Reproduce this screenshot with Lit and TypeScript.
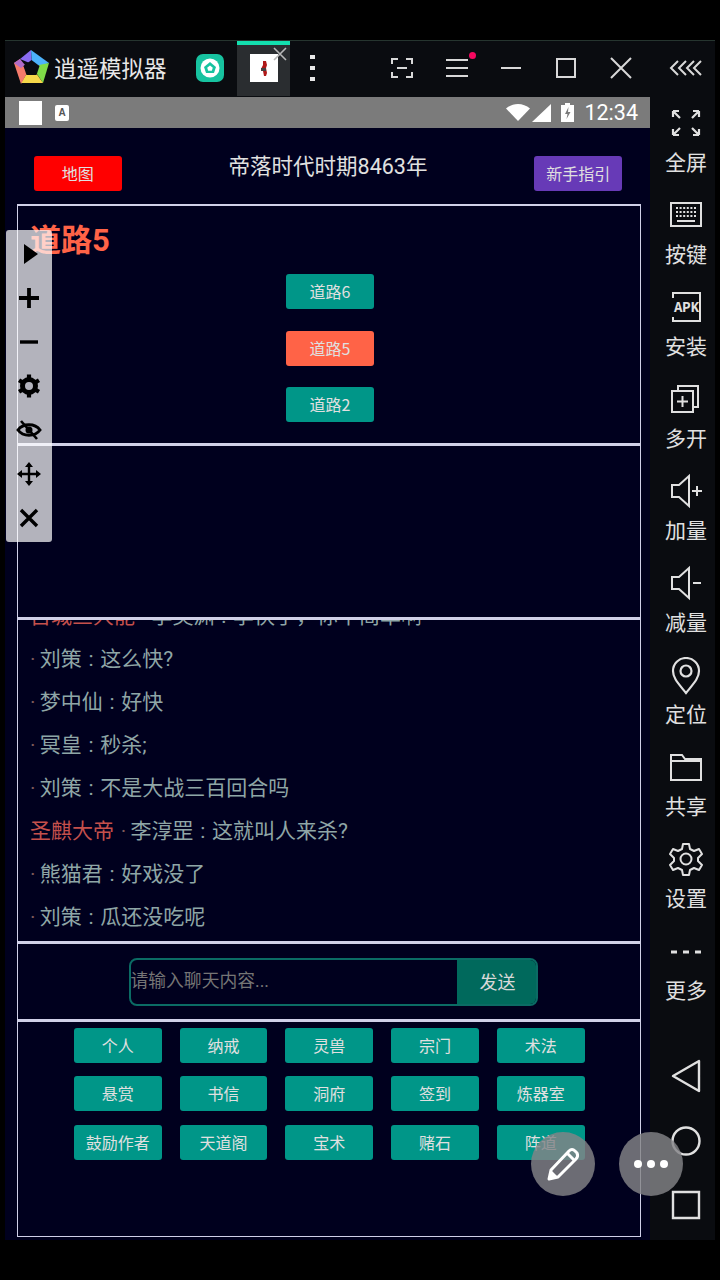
import { LitElement, html, css, svg } from "lit";
import { customElement } from "lit/decorators.js";

const sideItems: [string, unknown][] = [
  ["全屏", svg`<path d="M6 6l7 7M6 6v6M6 6h6M32 6l-7 7M32 6v6M32 6h-6M6 30l7-7M6 30v-6M6 30h6M32 30l-7-7M32 30v-6M32 30h-6" stroke-width="2.2"/>`],
  ["按键", svg`<rect x="4" y="6" width="30" height="23" stroke-width="2"/><path d="M9 11h20M9 15h20M9 19h20" stroke-width="2" stroke-dasharray="2 1.6"/><path d="M10 24h18" stroke-width="2"/>`],
  ["安装", svg`<path d="M6 9V4h27v28H6v-4" stroke-width="2"/><text x="19.5" y="23" text-anchor="middle" class="apk">APK</text>`],
  ["多开", svg`<path d="M11 10V5h20v21h-5" stroke-width="2"/><rect x="5" y="10" width="21" height="21" stroke-width="2"/><path d="M15.500 15v11M10 20.500h11" stroke-width="2"/>`],
  ["加量", svg`<path d="M5 12h7l10-9v30l-10-9H5z" stroke-width="2"/><path d="M25 18h10M30 13v10" stroke-width="2"/>`],
  ["减量", svg`<path d="M5 12h7l10-9v30l-10-9H5z" stroke-width="2"/><path d="M26 18h8" stroke-width="2"/>`],
  ["定位", svg`<path d="M19 36C11 26 6 21 6 14a13 13 0 0 1 26 0c0 7-5 12-13 22z" stroke-width="2.2"/><circle cx="19" cy="14" r="5.500" stroke-width="2.2"/>`],
  ["共享", svg`<path d="M4 31V6h11l3 4h16v21zM4 12h30" stroke-width="2"/>`],
  ["设置", svg`<path d="M16 3h6l1 5 4 2 5-2 3 5-4 4v3l4 4-3 5-5-2-4 2-1 5h-6l-1-5-4-2-5 2-3-5 4-4v-3l-4-4 3-5 5 2 4-2z" stroke-width="2" stroke-linejoin="round"/><circle cx="19" cy="18" r="5.500" stroke-width="2"/>`],
  ["更多", svg`<path d="M4 19h6M16 19h6M28 19h6" stroke-width="3"/>`],
];

const toolIcons = [
  svg`<path d="M8 3l14 10L8 23z" fill="#000"/>`,
  svg`<path d="M13 3v20M3 13h20" stroke="#000" stroke-width="3.800" fill="none"/>`,
  svg`<path d="M4 13h18" stroke="#000" stroke-width="3.400" fill="none"/>`,
  svg`<circle cx="13" cy="13" r="6.500" fill="none" stroke="#000" stroke-width="5"/><path d="M13 1.500v5M13 19.500v5M3.040 7.250l4.300 2.500M18.660 16.250l4.300 2.500M3.040 18.750l4.300-2.500M18.660 9.750l4.300-2.500" stroke="#000" stroke-width="4.200"/>`,
  svg`<path d="M2 13c5-7 17-7 22 0-5 7-17 7-22 0z" fill="none" stroke="#000" stroke-width="3"/><circle cx="13" cy="13" r="3.500" fill="#000"/><path d="M5 4l16 18" stroke="#000" stroke-width="2.600"/>`,
  svg`<path d="M13 3v20M3 13h20" stroke="#000" stroke-width="2.400" fill="none"/><path d="M13 1l4 5H9zM13 25l4-5H9zM1 13l5-4v8zM25 13l-5-4v8z" fill="#000"/>`,
  svg`<path d="M5 5l16 16M21 5L5 21" stroke="#000" stroke-width="3.400" fill="none"/>`,
];

const chat: [string, string][] = [
  ["古城三大能", "李英渊 : 李快了，你不简单啊"],
  ["", "刘策 : 这么快?"],
  ["", "梦中仙 : 好快"],
  ["", "冥皇 : 秒杀;"],
  ["", "刘策 : 不是大战三百回合吗"],
  ["圣麒大帝", "李淳罡 : 这就叫人来杀?"],
  ["", "熊猫君 : 好戏没了"],
  ["", "刘策 : 瓜还没吃呢"],
];

const gridRows = [
  ["个人", "纳戒", "灵兽", "宗门", "术法"],
  ["悬赏", "书信", "洞府", "签到", "炼器室"],
  ["鼓励作者", "天道阁", "宝术", "赌石", "阵道"],
];

@customElement("app-root")
export class AppRoot extends LitElement {
  static styles = css`
    :host {
      display: block;
      width: 720px;
      height: 1280px;
      background: #000;
      overflow: hidden;
      position: relative;
      font-family: "Noto Sans CJK SC", "Noto Sans", sans-serif;
    }
    .window {
      margin: 40px 5px 0;
      width: 710px;
      height: 1200px;
      border-top: 1px solid #26352f;
      box-sizing: border-box;
      display: flex;
      flex-direction: column;
      background: #0a0c10;
    }
    .bar {
      height: 56px;
      flex: none;
      display: flex;
      align-items: center;
      color: #e8e8e8;
      position: relative;
      padding-bottom: 2px;
      box-sizing: border-box;
    }
    .logo { margin-left: 8px; width: 38px; height: 38px; flex: none; }
    .brand { margin-left: 3px; font-size: 22.500px; width: 113px; white-space: nowrap; line-height: 30px; margin-top: -3px; }
    .appicon { margin-left: 29px; width: 28px; height: 28px; flex: none; }
    .tab {
      margin-left: 13px;
      width: 53px;
      height: 55px;
      background: #2a2d30;
      border-top: 4px solid #13dfae;
      box-sizing: border-box;
      position: relative;
      display: flex;
      align-items: center;
      justify-content: center;
      flex: none;
      align-self: flex-start;
    }
    .tabthumb { width: 28px; height: 28px; background: #fff; margin-top: -5px; }
    .tabx { position: absolute; top: 2px; right: 3px; width: 14px; height: 14px; }
    .win { flex: none; display: block; overflow: visible; }
    .win * { fill: none; stroke: #d8d8d8; }
    .i1 { margin-left: 19px; }
    .i2 { margin-left: 75px; }
    .i3, .i4 { margin-left: 33px; }
    .i5 { margin-left: 35px; }
    .i6 { margin-left: 39px; }
    .dot { position: absolute; left: 464px; top: 11px; width: 7px; height: 7px; border-radius: 50%; background: #f5085f; }
    .body { flex: 1; display: flex; min-height: 0; }
    .screen { width: 645px; flex: none; display: flex; flex-direction: column; background: #00001e; }
    .status {
      height: 31px;
      flex: none;
      background: #7b7b7b;
      display: flex;
      align-items: center;
      padding: 0 12px 0 14px;
    }
    .sq { width: 23px; height: 24px; background: #fff; }
    .aicon { margin-left: 13px; width: 14px; height: 16px; background: #fff; border-radius: 2px; color: #555; font: bold 10px "Liberation Sans", sans-serif; text-align: center; line-height: 15px; }
    .spacer { flex: 1; }
    .time { font: 21.500px Roboto, sans-serif; color: #fff; margin-left: 10px; }
    .st { display: block; flex: none; }
    .st2 { margin-left: 2px; }
    .st3 { margin-left: 10px; }
    .app { flex: 1; min-height: 0; display: flex; flex-direction: column; padding: 0 9px 3px 12px; }
    .head { height: 76px; flex: none; display: flex; padding: 28px 19px 0 17px; box-sizing: border-box; }
    .head .title { flex: 1; text-align: center; color: #e0e0e0; font-family: Roboto, "Noto Sans CJK SC", sans-serif; font-size: 21.500px; line-height: 30px; margin-top: -4px; white-space: nowrap; }
    .btn {
      width: 87.600px;
      height: 35px;
      line-height: 35px;
      border-radius: 3px;
      text-align: center;
      font-size: 16px;
      color: #e0e0e0;
      background: #009688;
      flex: none;
      white-space: nowrap;
    }
    .btn.red { background: #f00; }
    .btn.purple { background: #673ab7; }
    .btn.tomato { background: #ff6347; }
    .panel { border: 1px solid #d0d0e8; border-top-width: 2px; box-sizing: border-box; flex: none; }
    .p1 { height: 240px; padding: 0 0 0 12px; }
    .p1 h1 { margin: 13px 0 0; font-family: Roboto, "Noto Sans CJK SC", sans-serif; font-size: 31px; line-height: 44px; font-weight: 700; color: #ff6347; height: 53px; }
    .roads { display: flex; flex-direction: column; align-items: center; gap: 21.500px; margin-left: -10px; padding-top: 2px; }
    .p2 { height: 174px; }
    .p3 { height: 324px; overflow: hidden; display: flex; flex-direction: column; justify-content: flex-end; padding: 0 12px 2px; }
    .line { flex: none; height: 43px; line-height: 43px; font-family: Roboto, "Noto Sans CJK SC", sans-serif; font-size: 21px; word-spacing: 1.500px; color: #8fa6a6; white-space: nowrap; }
    .line b { font-weight: 400; color: #c5504c; }
    .line i { font-style: normal; color: #7e5a5a; margin-right: -2.500px; }
    .p4 { height: 78px; display: flex; justify-content: center; align-items: center; padding-left: 8px; }
    .send { width: 409px; height: 48px; display: flex; border: 2px solid #0b6b64; border-radius: 8px; box-sizing: border-box; overflow: hidden; }
    .send input { flex: 1; min-width: 0; background: transparent; border: 0; outline: 0; padding: 0 0 2px 0; font: 17.800px Roboto, "Noto Sans CJK SC", sans-serif; color: #ccc; }
    .send input::placeholder { color: #757575; opacity: 1; }
    .send span { width: 76px; background: #00695c; color: #d8d8d8; text-align: center; font-size: 18px; line-height: 42px; padding-left: 3px; }
    .p5 { flex: 1; min-height: 0; padding: 6px 0 0 56px; display: flex; flex-direction: column; gap: 13.300px; }
    .p5 .btn { line-height: 34px; }
    .row { display: flex; gap: 18.150px; }
    .side { flex: 1; display: flex; flex-direction: column; padding: 5px 0 0 7px; color: #e0e0e0; }
    .sitem { height: 92px; flex: none; display: flex; flex-direction: column; align-items: center; }
    .sitem svg { width: 38px; height: 38px; margin-top: 3px; margin-bottom: 3px; fill: none; stroke: #e0e0e0; flex: none; }
    .sitem svg .apk { font: 700 14px "Liberation Mono", monospace; fill: #e0e0e0; stroke: none; }
    .sitem span { font-size: 21px; line-height: 30px; }
    .nav { margin-top: 22px; display: flex; flex-direction: column; align-items: center; }
    .nav svg { width: 34px; height: 64.500px; fill: none; stroke: #e0e0e0; stroke-width: 2.400; display: block; }
    .tools {
      position: absolute;
      left: 6px;
      top: 230px;
      width: 46px;
      height: 312px;
      background: rgba(255, 255, 255, 0.7);
      border-radius: 3px;
      display: flex;
      flex-direction: column;
      align-items: center;
      padding-top: 2px;
      box-sizing: border-box;
    }
    .tools div { height: 44px; flex: none; display: flex; align-items: center; justify-content: center; }
    .tools svg { width: 26px; height: 26px; display: block; }
    .fab {
      position: absolute;
      top: 1132px;
      width: 64px;
      height: 64px;
      border-radius: 50%;
      background: rgba(132, 132, 136, 0.82);
      display: flex;
      align-items: center;
      justify-content: center;
    }
    .f1 { left: 531px; }
    .f2 { left: 619px; gap: 5px; }
    .f2 i { width: 8px; height: 8px; border-radius: 50%; background: #fff; }
  `;

  render() {
    return html`
      <div class="window">
        <div class="bar">
          <svg class="logo" viewBox="0 0 38 38">
            <path d="M18 1L7 10l12 5z" fill="#8a6cf2"/>
            <path d="M18 1l18 13-10 4-7-4z" fill="#4cb2fa"/>
            <path d="M36 14l-6 20-8-12 4-6z" fill="#7fdc48"/>
            <path d="M30 34H8l6-10h9z" fill="#f6d84a"/>
            <path d="M8 35L1 14l6-4 7 14z" fill="#f57b6b"/>
            <path d="M1 14L7 10l5 6-4 3z" fill="#b06cc8"/>
            <path d="M18.500 11l8 6-3 9h-10l-3-9z" fill="#0a0c10"/>
          </svg>
          <div class="brand">逍遥模拟器</div>
          <svg class="appicon" viewBox="0 0 28 28">
            <rect width="28" height="28" rx="7" fill="#17c3a0"/>
            <circle cx="14" cy="14" r="9.500" fill="#fff"/>
            <path d="M14 8l6 5-2 6h-8l-2-6z" fill="#17c3a0"/>
            <path d="M14 11.500l2.800 2.300-1 3h-3.600l-1-3z" fill="#fff"/>
          </svg>
          <div class="tab">
            <div class="tabthumb">
              <svg viewBox="0 0 28 28" width="28" height="28">
                <path d="M13 7h3l1 4-1 3 1 5-1 3h-2l-1-5-2-2 2-4z" fill="#b01818"/>
                <path d="M11 14h5v3h-5z" fill="#444"/>
              </svg>
            </div>
            <svg class="tabx" viewBox="0 0 14 14"><path d="M1 1l12 12M13 1L1 13" stroke="#b8b8b8" stroke-width="1.600"/></svg>
          </div>
          <svg class="win i1" width="7" height="26" viewBox="0 0 7 26">
            <path style="stroke:none;fill:#e8e8e8" d="M1 0h5v4H1zM1 11h5v4H1zM1 22h5v4H1z"/>
          </svg>
          <svg class="win i2" width="22" height="20" viewBox="0 0 22 20">
            <path stroke-width="2" d="M1 6V1h6M15 1h6v5M1 14v5h6M15 19h6v-5M6 10h10"/>
          </svg>
          <svg class="win i3" width="22" height="20" viewBox="0 0 22 20">
            <path stroke-width="2.200" d="M0 2h22M0 10h22M0 18h22"/>
          </svg>
          <svg class="win i4" width="20" height="20" viewBox="0 0 20 20">
            <path stroke-width="2" d="M0 10h20"/>
          </svg>
          <svg class="win i5" width="20" height="20" viewBox="0 0 20 20">
            <path stroke-width="2" d="M1 1h18v18H1z"/>
          </svg>
          <svg class="win i5" width="20" height="20" viewBox="0 0 20 20">
            <path stroke-width="2" d="M0 0l20 20M20 0L0 20"/>
          </svg>
          <svg class="win i6" width="32" height="16" viewBox="0 0 32 16">
            <path stroke-width="2" d="M8 1L1 8l7 7M16 1L9 8l7 7M24 1l-7 7 7 7M31 1l-7 7 7 7"/>
          </svg>
          <div class="dot"></div>
        </div>
        <div class="body">
          <div class="screen">
            <div class="status">
              <div class="sq"></div>
              <div class="aicon">A</div>
              <div class="spacer"></div>
              <svg class="st" width="24" height="17" viewBox="0 0 24 17"><path d="M0 4.500C7-1.500 17-1.500 24 4.500L12 17z" fill="#fff"/></svg>
              <svg class="st st2" width="19" height="18" viewBox="0 0 19 18"><path d="M19 0v18H0z" fill="#fff"/></svg>
              <svg class="st st3" width="13" height="19" viewBox="0 0 13 19"><path d="M4 0h5v2h4v17H0V2h4z" fill="#fff"/><path d="M7.500 4L4 11h2.500l-1 5L9.500 9H7z" fill="#7b7b7b"/></svg>
              <div class="time">12:34</div>
            </div>
            <div class="app">
              <div class="head">
                <div class="btn red">地图</div>
                <div class="title">帝落时代时期8463年</div>
                <div class="btn purple">新手指引</div>
              </div>
              <div class="panel p1">
                <h1>道路5</h1>
                <div class="roads">
                  <div class="btn">道路6</div>
                  <div class="btn tomato">道路5</div>
                  <div class="btn">道路2</div>
                </div>
              </div>
              <div class="panel p2"></div>
              <div class="panel p3">
                ${chat.map(
                  ([tag, msg]) => html`<div class="line">${tag ? html`<b>${tag}</b> ` : ""}<i>·</i> ${msg}</div>`
                )}
              </div>
              <div class="panel p4">
                <div class="send">
                  <input placeholder="请输入聊天内容..." />
                  <span>发送</span>
                </div>
              </div>
              <div class="panel p5">
                ${gridRows.map(
                  (r) => html`<div class="row">${r.map((t) => html`<div class="btn">${t}</div>`)}</div>`
                )}
              </div>
            </div>
          </div>
          <div class="side">
            ${sideItems.map(
              ([label, icon]) => html`<div class="sitem"><svg viewBox="0 0 38 38">${icon}</svg><span>${label}</span></div>`
            )}
            <div class="nav">
              <svg viewBox="0 0 34 64.500"><path d="M30 17v30L4 32z" stroke-linejoin="round"/></svg>
              <svg viewBox="0 0 34 64.500"><circle cx="17" cy="32" r="13.500"/></svg>
              <svg viewBox="0 0 34 64.500"><path d="M4 19h26v26H4z"/></svg>
            </div>
          </div>
        </div>
      </div>
      <div class="tools">
        ${toolIcons.map((i) => html`<div><svg viewBox="0 0 26 26">${i}</svg></div>`)}
      </div>
      <div class="fab f1">
        <svg width="36" height="36" viewBox="0 0 36 36">
          <path d="M4 33l2-9L24 5c2-2 4-2 6 0l2 2c1 2 1 4-1 6L13 31z" fill="none" stroke="#fff" stroke-width="3" stroke-linejoin="round"/>
          <path d="M4 33l2-9 7 7z" fill="#fff"/>
          <path d="M22 7l8 8" stroke="#fff" stroke-width="3"/>
        </svg>
      </div>
      <div class="fab f2"><i></i><i></i><i></i></div>
    `;
  }
}
